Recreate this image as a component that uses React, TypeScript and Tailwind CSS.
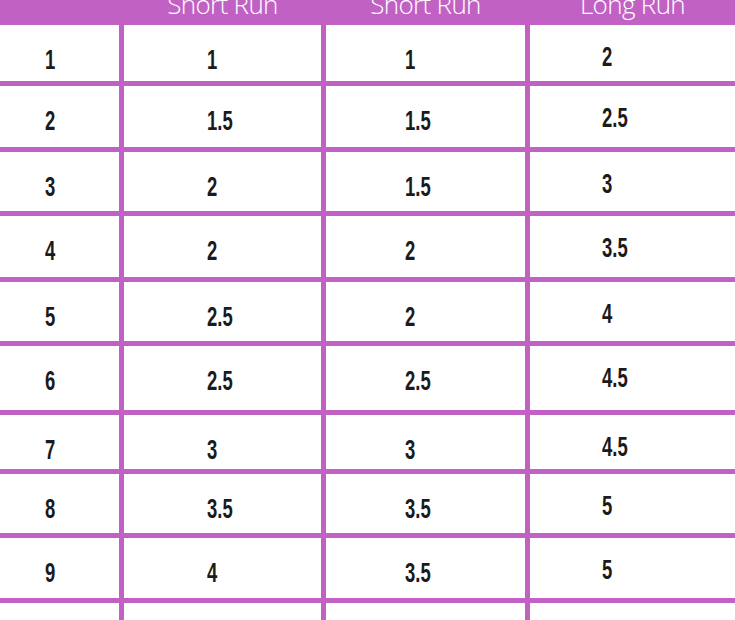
const rows: [string, string, string, string][] = [
  ["1", "1", "1", "2"],
  ["2", "1.5", "1.5", "2.5"],
  ["3", "2", "1.5", "3"],
  ["4", "2", "2", "3.5"],
  ["5", "2.5", "2", "4"],
  ["6", "2.5", "2.5", "4.5"],
  ["7", "3", "3", "4.5"],
  ["8", "3.5", "3.5", "5"],
  ["9", "4", "3.5", "5"],
  ["", "", "", ""],
];

export default function App() {
  return (
    <div className="w-[735px] h-[620px] overflow-hidden bg-white">
      <div className="grid grid-cols-[119px_197px_199px_205px] grid-rows-[20px_56px_61px_59px_61px_59px_64px_54px_59px_60px_40px] gap-[5px] bg-[#c161c4] w-[740px]">
        {/* header band */}
        <div />
        {["Short Run", "Short Run", "Long Run"].map((h, i) => (
          <div key={i} className="flex justify-center">
            <span
              className="-mt-[9px] text-[26px] leading-[26px] text-white font-light tracking-tight"
              style={{ fontFamily: '"Open Sans", Lato, sans-serif' }}
            >
              {h}
            </span>
          </div>
        ))}

        {rows.map((r, i) =>
          r.map((v, j) => (
            <div
              key={i + "-" + j}
              className={
                "bg-white " +
                (j === 0
                  ? "pl-[45px] pt-[21px]"
                  : j === 1
                  ? "pl-[83px] pt-[21px]"
                  : j === 2
                  ? "pl-[79px] pt-[21px]"
                  : "pl-[72px] pt-[18px]")
              }
            >
              <span className="inline-block origin-left scale-x-[0.66] text-[28px] leading-none font-bold text-[#1b1b1b] font-['Liberation_Sans',sans-serif]">
                {v}
              </span>
            </div>
          ))
        )}
      </div>
    </div>
  );
}
